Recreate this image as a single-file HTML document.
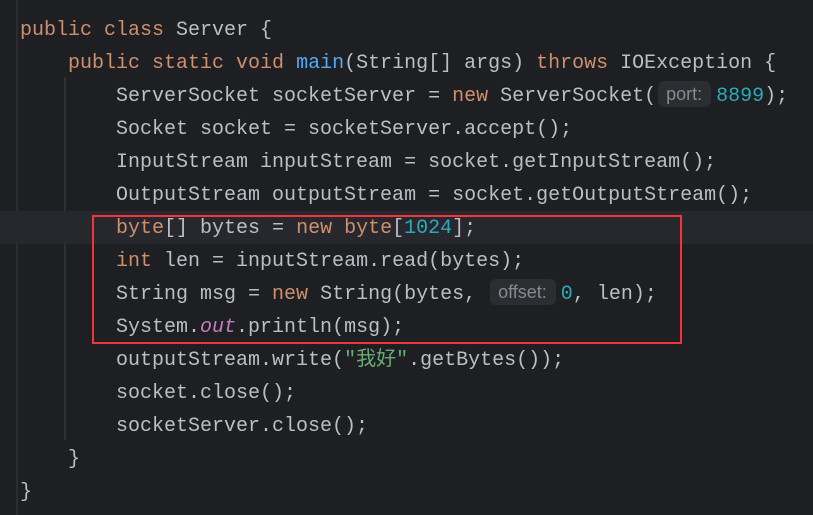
<!DOCTYPE html>
<html><head><style>
body{margin:0;width:813px;height:515px;background:#1e1f22;overflow:hidden;position:relative;font-family:"Liberation Mono","Noto Sans CJK SC",monospace;font-size:20px;color:#bcbec4}
.l{position:absolute;left:20px;height:33px;line-height:33px;white-space:pre}
.k{color:#cf8e6d}.f{color:#56a8f5}.n{color:#2aacb8}.s{color:#6aab73}.st{color:#c77dbb;font-style:italic}
.h{display:inline-block;background:#2b2d30;color:#868a91;font-family:"Liberation Sans",sans-serif;font-size:18px;line-height:26px;padding:0 9px 0 8px;border-radius:6px;margin:0 5px 0 2px;vertical-align:1px}
</style></head><body>
<div style="position:absolute;left:16px;top:0;width:2px;height:515px;background:#2b2d30"></div>
<div style="position:absolute;left:64px;top:77px;width:2px;height:363px;background:#2f3134"></div>
<div style="position:absolute;left:0;top:211px;width:813px;height:33px;background:#26282e"></div>
<div class="l" style="top:14px"><span class="k">public class</span> Server {</div>
<div class="l" style="top:47px">    <span class="k">public static void</span> <span class="f">main</span>(String[] args) <span class="k">throws</span> IOException {</div>
<div class="l" style="top:80px">        ServerSocket socketServer = <span class="k">new</span> ServerSocket(<span class="h">port:</span><span class="n">8899</span>);</div>
<div class="l" style="top:113px">        Socket socket = socketServer.accept();</div>
<div class="l" style="top:146px">        InputStream inputStream = socket.getInputStream();</div>
<div class="l" style="top:179px">        OutputStream outputStream = socket.getOutputStream();</div>
<div class="l" style="top:212px">        <span class="k">byte</span>[] bytes = <span class="k">new byte</span>[<span class="n">1024</span>];</div>
<div class="l" style="top:245px">        <span class="k">int</span> len = inputStream.read(bytes);</div>
<div class="l" style="top:278px">        String msg = <span class="k">new</span> String(bytes, <span class="h">offset:</span><span class="n">0</span>, len);</div>
<div class="l" style="top:311px">        System.<span class="st">out</span>.println(msg);</div>
<div class="l" style="top:344px">        outputStream.write(<span class="s">"我好"</span>.getBytes());</div>
<div class="l" style="top:377px">        socket.close();</div>
<div class="l" style="top:410px">        socketServer.close();</div>
<div class="l" style="top:443px">    }</div>
<div class="l" style="top:476px">}</div>
<div style="position:absolute;left:92px;top:215px;width:586px;height:125px;border:2px solid #f1353a"></div>
</body></html>
